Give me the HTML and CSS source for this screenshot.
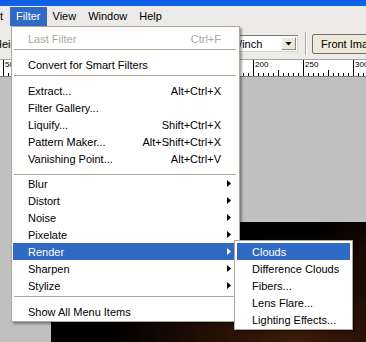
FILE: index.html
```html
<!DOCTYPE html>
<html>
<head>
<meta charset="utf-8">
<link rel="stylesheet" href="styles.css">
</head>
<body>
<div class="app">
  <div class="titlebar"></div>
  <div class="menubar">
    <span class="mb-item mb-cut">t</span>
    <span class="mb-item active">Filter</span>
    <span class="mb-item">View</span>
    <span class="mb-item">Window</span>
    <span class="mb-item">Help</span>
  </div>
  <div class="options">
    <span class="opt-label">Height:</span>
    <div class="dropdown">
      <span class="dd-text">pixels/inch</span>
      <span class="dd-btn"><span class="dd-tri"></span></span>
    </div>
    <span class="vsep"></span>
    <span class="button">Front Image</span>
  </div>
  <div class="ruler">
    <span class="tick first"></span>
    <span class="rcell">50</span>
    <span class="rcell">0</span>
    <span class="rcell">50</span>
    <span class="rcell">100</span>
    <span class="rcell">150</span>
    <span class="rcell">200</span>
    <span class="rcell">250</span>
    <span class="rcell">300</span>
  </div>
  <div class="workspace">
    <div class="doc"></div>
  </div>
</div>

<div class="menu">
  <div class="item disabled"><span class="label">Last Filter</span><span class="key">Ctrl+F</span></div>
  <div class="sep"></div>
  <div class="item"><span class="label">Convert for Smart Filters</span></div>
  <div class="sep"></div>
  <div class="item"><span class="label">Extract...</span><span class="key">Alt+Ctrl+X</span></div>
  <div class="item"><span class="label">Filter Gallery...</span></div>
  <div class="item"><span class="label">Liquify...</span><span class="key">Shift+Ctrl+X</span></div>
  <div class="item"><span class="label">Pattern Maker...</span><span class="key">Alt+Shift+Ctrl+X</span></div>
  <div class="item"><span class="label">Vanishing Point...</span><span class="key">Alt+Ctrl+V</span></div>
  <div class="sep tight"></div>
  <div class="item sub"><span class="label">Blur</span><span class="arrow"></span></div>
  <div class="item sub"><span class="label">Distort</span><span class="arrow"></span></div>
  <div class="item sub"><span class="label">Noise</span><span class="arrow"></span></div>
  <div class="item sub"><span class="label">Pixelate</span><span class="arrow"></span></div>
  <div class="item sub hl"><span class="label">Render</span><span class="arrow"></span></div>
  <div class="item sub"><span class="label">Sharpen</span><span class="arrow"></span></div>
  <div class="item sub"><span class="label">Stylize</span><span class="arrow"></span></div>
  <div class="sep"></div>
  <div class="item"><span class="label">Show All Menu Items</span></div>
</div>

<div class="submenu">
  <div class="item hl"><span class="label">Clouds</span></div>
  <div class="item"><span class="label">Difference Clouds</span></div>
  <div class="item"><span class="label">Fibers...</span></div>
  <div class="item"><span class="label">Lens Flare...</span></div>
  <div class="item"><span class="label">Lighting Effects...</span></div>
</div>
</body>
</html>
```

FILE: styles.css
```css
* { box-sizing: border-box; }

body {
  margin: 0;
  width: 366px;
  height: 342px;
  overflow: hidden;
  position: relative;
  background: #c0c0c0;
  font-family: "Liberation Sans", Arial, sans-serif;
  font-size: 11px;
  color: #000;
}

.app {
  display: flex;
  flex-direction: column;
  height: 342px;
}

.titlebar {
  height: 6px;
  flex-shrink: 0;
  background: linear-gradient(#0b5de6, #1764e8);
}

.menubar {
  height: 20px;
  flex-shrink: 0;
  display: flex;
  align-items: flex-end;
  background: #ecebe8;
}

.mb-item {
  height: 19px;
  line-height: 19px;
  padding: 0 6px;
  white-space: nowrap;
}

.mb-cut { padding: 0 7px 0 0; }

.mb-item.active {
  background: #316ac5;
  color: #fff;
}

.options {
  height: 33px;
  flex-shrink: 0;
  display: flex;
  align-items: center;
  padding: 4px 0 2px 0;
  background: #ecebe8;
  white-space: nowrap;
}

.opt-label {
  flex-shrink: 0;
  width: 213px;
  margin-left: -6px;
}

.dropdown {
  flex-shrink: 0;
  width: 91px;
  height: 17px;
  display: flex;
  align-items: center;
  background: #fff;
  border: 1px solid #7a7a7a;
  border-right-color: #d6d3c8;
  border-bottom-color: #d6d3c8;
  padding-left: 3px;
}

.dd-text { flex: 1; }

.dd-btn {
  width: 15px;
  height: 13px;
  margin-right: 1px;
  background: #ece9d8;
  border: 1px solid #8a8a8a;
  border-top-color: #fff;
  border-left-color: #fff;
  display: flex;
  align-items: center;
  justify-content: center;
}

.dd-tri {
  width: 7px;
  height: 4px;
  background: #000;
  clip-path: polygon(0 0, 100% 0, 50% 100%);
}

.vsep {
  flex-shrink: 0;
  width: 2px;
  height: 23px;
  margin: 0 5px 0 7px;
  border-left: 1px solid #a6a6a6;
  border-right: 1px solid #fff;
}

.button {
  flex-shrink: 0;
  width: 90px;
  height: 20px;
  line-height: 18px;
  padding-left: 8px;
  background: #ece9d8;
  border: 1px solid #707070;
  border-radius: 2px;
}

.ruler {
  height: 18px;
  flex-shrink: 0;
  display: flex;
  background-color: #fff;
  border-top: 1px solid #a5a5a5;
  border-bottom: 1px solid #7a7a7a;
  background-image:
    repeating-linear-gradient(90deg, #000 0 1px, transparent 1px 5px),
    repeating-linear-gradient(90deg, #000 0 1px, transparent 1px 50px);
  background-size: 100% 3px, 100% 6px;
  background-position: 3px 100%, 28px 100%;
  background-repeat: no-repeat;
  overflow: hidden;
}

.tick.first { width: 3px; flex-shrink: 0; }

.rcell {
  flex-shrink: 0;
  width: 50px;
  border-left: 1px solid #000;
  padding-left: 1px;
  font-size: 8px;
  line-height: 9px;
}

.workspace {
  flex: 1;
  display: flex;
  padding: 145px 0 0 51px;
  background: #c0c0c0;
}

.doc {
  flex: 1;
  background:
    radial-gradient(ellipse 190px 110px at 78% 100%, #3d1c0b 0%, #1f0d04 55%, rgba(0,0,0,0) 100%),
    radial-gradient(ellipse 60px 60px at 100% 30%, #1a0a03 0%, rgba(0,0,0,0) 100%),
    #000;
}

.menu {
  position: absolute;
  left: 11px;
  top: 26px;
  width: 229px;
  background: #fff;
  border: 1px solid #aca899;
  padding: 3px 1px 1px 1px;
  box-shadow: 2px 2px 2px rgba(0, 0, 0, 0.35);
}

.submenu {
  position: absolute;
  left: 234px;
  top: 240px;
  width: 119px;
  background: #fff;
  border: 1px solid #aca899;
  padding: 2px 2px 1px 2px;
  box-shadow: 2px 2px 2px rgba(0, 0, 0, 0.35);
}

.item {
  height: 17px;
  display: flex;
  align-items: center;
  padding: 0 17px 0 15px;
  white-space: nowrap;
}

.item .label { flex: 1; }

.item.sub { padding-right: 7px; }

.item.disabled { color: #aca899; }

.item.hl {
  background: #316ac5;
  color: #fff;
}

.arrow {
  width: 4px;
  height: 7px;
  background: #000;
  clip-path: polygon(0 0, 100% 50%, 0 100%);
}

.item.hl .arrow { background: #fff; }

.sep {
  height: 1px;
  background: #aca899;
  margin: 2px 2px 6px 1px;
}

.sep.tight { margin: 7px 2px 0 1px; }
```
